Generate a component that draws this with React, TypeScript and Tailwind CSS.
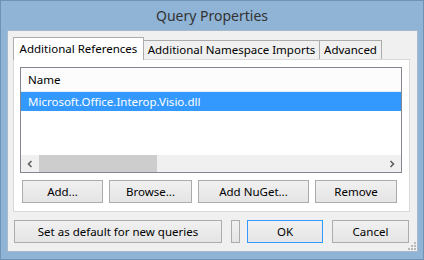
import React from "react";

const font = { fontFamily: '"Noto Sans", "Open Sans", sans-serif' };

function Btn({ w, children, cls = "" }: { w: string; children?: React.ReactNode; cls?: string }) {
  return (
    <div
      className={`${w} h-[23px] flex items-center justify-center border bg-gradient-to-b from-[#f0f0f0] to-[#e5e5e5] text-[11.5px] text-black ${cls || "border-[#acacac]"}`}
    >
      {children}
    </div>
  );
}

export default function App() {
  return (
    <div
      className="w-[424px] h-[260px] bg-[#8fb4d6] border border-[#6f93b5] flex flex-col"
      style={font}
    >
      <div className="h-[29px] flex items-center justify-center text-[14px] text-[#333333] pb-[1px]">
        Query Properties
      </div>
      <div className="ml-[6px] mr-[5px] mb-[7px] flex-1 bg-[#f0f0f0] border border-[#a7b9cc] relative flex flex-col pl-[5px] pr-[7px] pt-[6px]">
        {/* tabs */}
        <div className="flex items-end h-[22px]">
          <div className="w-[131px] h-[23px] -mb-[1px] bg-white border border-b-0 border-[#acacac] text-[11.5px] flex items-center justify-center text-black relative z-10">
            Additional References
          </div>
          <div className="w-[176px] h-[19px] bg-[#f0f0f0] border border-l-0 border-b-0 border-[#acacac] text-[11.5px] flex items-center justify-center text-black">
            Additional Namespace Imports
          </div>
          <div className="w-[62px] h-[19px] bg-[#f0f0f0] border border-l-0 border-b-0 border-[#acacac] text-[11.5px] flex items-center justify-center text-black">
            Advanced
          </div>
        </div>
        {/* panel */}
        <div className="h-[153px] bg-white border border-[#d9d9d9] pl-[6px] pr-[7px] pt-[7px] flex flex-col">
          <div className="h-[106px] border border-[#828790] flex flex-col bg-white">
            <div className="h-[24px] bg-[#fcfcfc] border-b border-[#e5eef8] flex items-center pl-[7px] text-[11.5px] text-black">
              Name
            </div>
            <div className="h-[19px] bg-[#3399ff] flex items-center pl-[7px] text-[11.5px] text-white">
              Microsoft.Office.Interop.Visio.dll
            </div>
            <div className="flex-1" />
            <div className="h-[17px] bg-[#f0f0f0] flex items-center">
              <div className="w-[18px] h-full flex items-center justify-center">
                <svg width="6" height="8" viewBox="0 0 6 8">
                  <path d="M4.5 1 L1.5 4 L4.5 7" stroke="#606060" strokeWidth="1.6" fill="none" />
                </svg>
              </div>
              <div className="w-[118px] h-full bg-[#cdcdcd]" />
              <div className="flex-1" />
              <div className="w-[18px] h-full flex items-center justify-center">
                <svg width="6" height="8" viewBox="0 0 6 8">
                  <path d="M1.5 1 L4.5 4 L1.5 7" stroke="#606060" strokeWidth="1.6" fill="none" />
                </svg>
              </div>
            </div>
          </div>
          <div className="flex mt-[7px] pl-[2px] gap-[6px]">
            <Btn w="w-[81px]">Add...</Btn>
            <Btn w="w-[83px]">Browse...</Btn>
            <Btn w="w-[111px]">Add NuGet...</Btn>
            <Btn w="w-[82px]">Remove</Btn>
          </div>
        </div>
        {/* bottom buttons */}
        <div className="flex mt-[8px] pl-[1px]">
          <Btn w="w-[208px]">Set as default for new queries</Btn>
          <div className="w-[9px] h-[23px] ml-[9px] border border-[#acacac] bg-gradient-to-b from-[#f0f0f0] to-[#e5e5e5]" />
          <Btn w="w-[76px] ml-[7px]" cls="border-[#3399ff]">OK</Btn>
          <Btn w="w-[77px] ml-[9px]">Cancel</Btn>
        </div>
        <svg className="absolute right-[1px] bottom-[1px]" width="8" height="8" viewBox="0 0 8 8">
          <rect x="6" y="0" width="2" height="2" fill="#b8b8b8" />
          <rect x="3" y="3" width="2" height="2" fill="#b8b8b8" />
          <rect x="6" y="3" width="2" height="2" fill="#b8b8b8" />
          <rect x="0" y="6" width="2" height="2" fill="#b8b8b8" />
          <rect x="3" y="6" width="2" height="2" fill="#b8b8b8" />
          <rect x="6" y="6" width="2" height="2" fill="#b8b8b8" />
        </svg>
      </div>
    </div>
  );
}
